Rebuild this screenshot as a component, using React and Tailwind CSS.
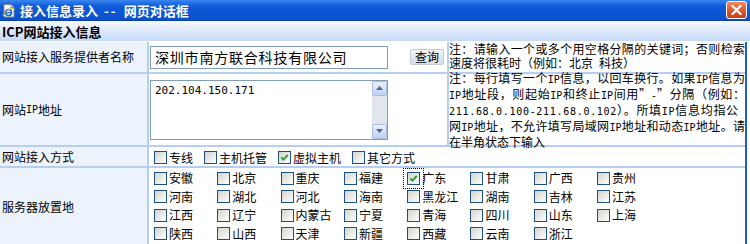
import React from "react";

const cjk = "font-['Noto_Sans_CJK_SC','Noto_Sans',sans-serif]";

const provinces = [
  ["安徽", "北京", "重庆", "福建", "广东", "甘肃", "广西", "贵州"],
  ["河南", "湖北", "河北", "海南", "黑龙江", "湖南", "吉林", "江苏"],
  ["江西", "辽宁", "内蒙古", "宁夏", "青海", "四川", "山东", "上海"],
  ["陕西", "山西", "天津", "新疆", "西藏", "云南", "浙江"],
];

// half-width runs get a 6px-per-char mono face, like the old SimSun page
function Mixed({ text }) {
  return text.split(/([\x20-\x7e]+)/).map((p, i) =>
    /^[\x20-\x7e]+$/.test(p) ? (
      <span key={i} className="font-['DejaVu_Sans_Mono',monospace] text-[10px]">
        {p}
      </span>
    ) : (
      p
    )
  );
}

function CheckBox({ checked = false, focused = false }) {
  return (
    <span
      className={
        "flex h-[13px] w-[13px] shrink-0 items-center justify-center border border-[#1c5180] bg-linear-to-br from-[#d4d4cc] to-white " +
        (focused ? "outline outline-dotted outline-black outline-offset-[3px]" : "")
      }
    >
      {checked && (
        <svg width="9" height="9" viewBox="0 0 9 9">
          <path d="M1.3 4.3 L3.4 6.6 L7.8 1.8" fill="none" stroke="#21a121" strokeWidth="1.9" />
        </svg>
      )}
    </span>
  );
}

function Option({ label, checked, focused }) {
  return (
    <label className="flex items-center gap-[2px] leading-none">
      <CheckBox checked={checked} focused={focused} />
      <span>{label}</span>
    </label>
  );
}

function Label({ children }) {
  return (
    <div className="flex w-[149px] shrink-0 items-center border-r-2 border-[#b5cff1] bg-[#ecf3fd] pl-[2px] leading-none">
      {children}
    </div>
  );
}

// lines: plain strings are justified (except the last); objects carry their own class
function Note({ lines }) {
  return (
    <div className="flex flex-1 flex-col justify-center leading-[14px]">
      {lines.map((line, i) => {
        const text = typeof line === "string" ? line : line.text;
        const cls =
          typeof line === "string"
            ? i < lines.length - 1
              ? "[text-align-last:justify]"
              : ""
            : line.cls;
        return (
          <div key={i} className={cls}>
            <Mixed text={text} />
          </div>
        );
      })}
    </div>
  );
}

function TitleBar() {
  return (
    <div className="flex h-[21px] items-center border-b border-[#0a3fa6] bg-linear-to-b from-[#3a86f0] via-[#0e5bd9] via-30% to-[#0a50cc] pl-[2px] pr-[3px]">
      <svg width="14" height="15" viewBox="0 0 14 15" className="shrink-0">
        <path d="M2 1.5h7l3 3v9.5H2z" fill="#fff" stroke="#7d8790" strokeWidth="1" />
        <path d="M9 1.5v3h3" fill="#dfe3e8" stroke="#7d8790" strokeWidth="1" />
        <circle cx="6.5" cy="9.5" r="3" fill="none" stroke="#1b6bd6" strokeWidth="1.7" />
        <path d="M3.6 9.5h5.6" stroke="#1b6bd6" strokeWidth="1.3" />
        <path d="M1 13 C3 6.5 10 4.5 12.5 6.5" fill="none" stroke="#e9a800" strokeWidth="1" />
      </svg>
      <span className="ml-[4px] text-[13px] font-bold leading-none text-white">
        接入信息录入<span className="mx-[6px] tracking-[2px]">--</span>网页对话框
      </span>
      <div className="ml-auto flex h-[18px] w-[21px] items-center justify-center rounded-[3px] border border-white bg-linear-to-b from-[#ec8a66] via-[#dd5a30] to-[#c43f18]">
        <svg width="11" height="10" viewBox="0 0 11 10">
          <path d="M1.5 1 L9.5 9 M9.5 1 L1.5 9" stroke="#fff" strokeWidth="2.2" strokeLinecap="square" />
        </svg>
      </div>
    </div>
  );
}

function ScrollButton({ up }) {
  return (
    <div className="flex h-[15px] items-center justify-center rounded-[2px] border border-[#a9bee2] bg-linear-to-b from-[#e9f0fb] to-[#bfd1f1]">
      <svg width="7" height="4" viewBox="0 0 7 4">
        <path d={up ? "M0 4 L3.5 0 L7 4z" : "M0 0 L3.5 4 L7 0z"} fill="#4d6690" />
      </svg>
    </div>
  );
}

export default function App() {
  return (
    <div className={`h-[244px] w-[750px] overflow-hidden bg-white text-[12px] text-black ${cjk}`}>
      <TitleBar />
      <div className="flex h-[20px] items-center bg-linear-to-b from-[#f6faff] via-[#dde9fb] to-[#c5daf6] pl-[2px] text-[13px] font-bold leading-none">
        ICP网站接入信息
      </div>
      <div className="flex pt-[1px]">
        <div className="w-[745px]">
          {/* 服务提供者 */}
          <div className="flex h-[32px] border-b-2 border-[#b5cff1]">
            <Label>网站接入服务提供者名称</Label>
            <div className="flex w-[300px] shrink-0 items-center border-r-2 border-[#b5cff1] pl-[1px]">
              <div className="flex h-[23px] w-[238px] items-center border border-[#7f9db9] pl-[4px] text-[14px] leading-none tracking-[0.8px]">
                深圳市南方联合科技有限公司
              </div>
              <button className="ml-[22px] flex h-[16px] w-[34px] items-center justify-center rounded-[2px] border border-[#c2cad6] bg-linear-to-b from-[#f1f4f8] to-[#d5dde8] text-[12px] leading-none">
                查询
              </button>
            </div>
            <Note
              lines={[
                "注：请输入一个或多个用空格分隔的关键词；否则检索",
                "速度将很耗时（例如：北京 科技）",
              ]}
            />
          </div>

          {/* IP 地址 */}
          <div className="flex h-[73px] border-b-2 border-[#b5cff1]">
            <Label>
              <Mixed text="网站IP地址" />
            </Label>
            <div className="flex w-[300px] shrink-0 items-center border-r-2 border-[#b5cff1] pl-[1px]">
              <div className="flex h-[60px] w-[238px] border border-[#7f9db9]">
                <div className="flex-1 pl-[4px] pt-[3px] font-['DejaVu_Sans_Mono',monospace] text-[11px] leading-[13px]">
                  202.104.150.171
                </div>
                <div className="flex w-[15px] flex-col bg-[#e1e5ec]">
                  <ScrollButton up />
                  <div className="flex-1" />
                  <ScrollButton />
                </div>
              </div>
            </div>
            <Note
              lines={[
                "注：每行填写一个IP信息，以回车换行。如果IP信息为",
                "IP地址段，则起始IP和终止IP间用”-”分隔（例如：",
                { text: "211.68.0.100-211.68.0.102）。所填IP信息均指公", cls: "tracking-[0.7px]" },
                "网IP地址，不允许填写局域网IP地址和动态IP地址。请",
                "在半角状态下输入",
              ]}
            />
          </div>

          {/* 接入方式 */}
          <div className="flex h-[21px] border-b-2 border-[#b5cff1]">
            <Label>网站接入方式</Label>
            <div className="flex flex-1 items-center gap-[11px] pl-[5px] pt-[2px]">
              <Option label="专线" />
              <Option label="主机托管" />
              <Option label="虚拟主机" checked />
              <Option label="其它方式" />
            </div>
          </div>

          {/* 放置地 */}
          <div className="flex">
            <Label>服务器放置地</Label>
            <div className="grid flex-1 auto-rows-[18.5px] grid-cols-[repeat(8,63.3px)] items-center pl-[5px] pt-[1px] pb-[2px]">
              {provinces.flat().map((p) => (
                <Option key={p} label={p} checked={p === "广东"} focused={p === "广东"} />
              ))}
            </div>
          </div>
        </div>
        <div className="w-[2px] bg-[#1f5bd1]" />
      </div>
    </div>
  );
}
